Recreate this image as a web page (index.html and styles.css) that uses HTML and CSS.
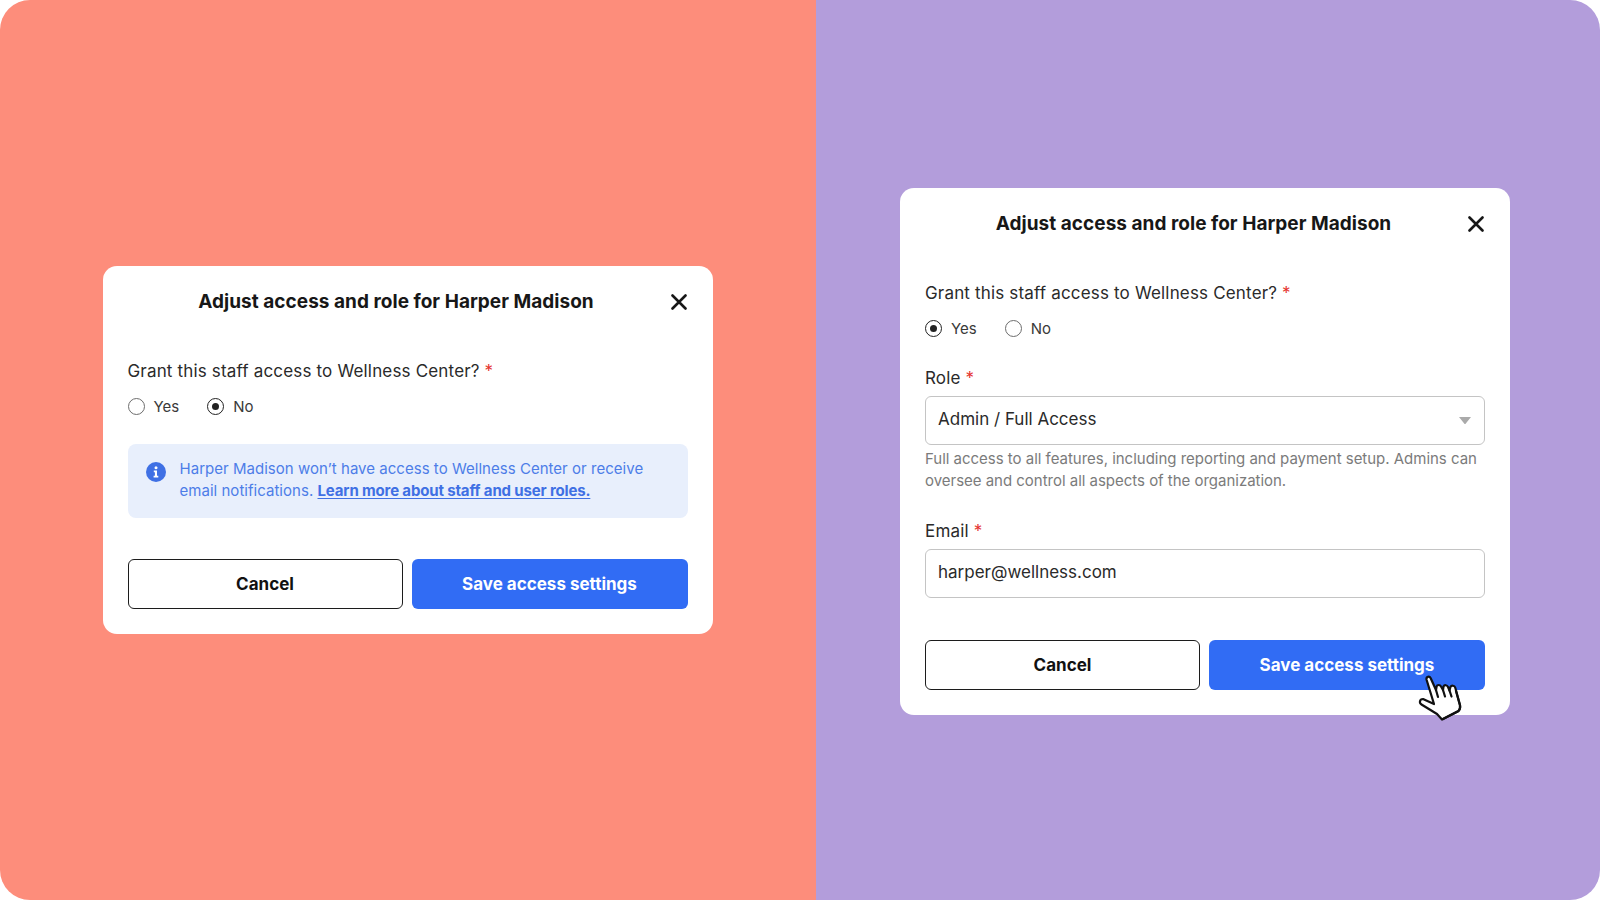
FILE: index.html
```html
<!DOCTYPE html>
<html lang="en">
<head>
<meta charset="utf-8">
<title>Adjust access</title>
<link rel="stylesheet" href="styles.css">
</head>
<body>
<main class="stage">
  <section class="panel panel-coral">
    <div class="dialog">
      <header class="dialog-head">
        <h2 class="dialog-title">Adjust access and role for Harper Madison</h2>
        <svg class="close" viewBox="0 0 16 16" width="16" height="16"><path d="M1.5 1.5 14.5 14.5M14.5 1.5 1.5 14.5"/></svg>
      </header>
      <div class="field-label q">Grant this staff access to Wellness Center? <span class="req">*</span></div>
      <div class="radios">
        <div class="radio"><span class="dot"></span>Yes</div>
        <div class="radio"><span class="dot on"></span>No</div>
      </div>
      <div class="notice">
        <svg class="info" viewBox="0 0 20 20" width="20" height="20"><circle cx="10" cy="10" r="10" fill="#3f70e4"/><circle cx="10" cy="5.8" r="1.500" fill="#fff"/><path d="M7.800 8.600H11v5.200h1.300v1.600H7.600v-1.600h1.300v-3.600H7.800z" fill="#fff"/></svg>
        <p class="notice-text">Harper Madison won’t have access to Wellness Center or receive email notifications. <a class="notice-link">Learn more about staff and user roles.</a></p>
      </div>
      <div class="actions">
        <div class="btn btn-ghost">Cancel</div>
        <div class="btn btn-primary">Save access settings</div>
      </div>
    </div>
  </section>
  <section class="panel panel-violet">
    <div class="dialog">
      <header class="dialog-head">
        <h2 class="dialog-title">Adjust access and role for Harper Madison</h2>
        <svg class="close" viewBox="0 0 16 16" width="16" height="16"><path d="M1.5 1.5 14.5 14.5M14.5 1.5 1.5 14.5"/></svg>
      </header>
      <div class="field-label q">Grant this staff access to Wellness Center? <span class="req">*</span></div>
      <div class="radios">
        <div class="radio"><span class="dot on"></span>Yes</div>
        <div class="radio"><span class="dot"></span>No</div>
      </div>
      <div class="field-label role">Role <span class="req">*</span></div>
      <div class="input">Admin / Full Access<svg class="caret" viewBox="0 0 12 7" width="12" height="7"><path d="M0 0h12L6.800 6.400a1 1 0 0 1-1.600 0z"/></svg></div>
      <p class="help">Full access to all features, including reporting and payment setup. Admins can oversee and control all aspects of the organization.</p>
      <div class="field-label email">Email <span class="req">*</span></div>
      <div class="input">harper@wellness.com</div>
      <div class="actions actions-form">
        <div class="btn btn-ghost">Cancel</div>
        <div class="btn btn-primary">Save access settings</div>
      </div>
      <svg class="hand" viewBox="0 0 60 60" width="60" height="60"><path d="M16.500 10.500C16 7.500 19.500 6.800 20.700 9.200L26 21l.6-3.500C27.200 15.500 30 15.500 31 17.500L33 21l.5-3.500C34.500 15.500 37 16 38 18l1.500 3.500.9-3.500C41.500 16 44.500 16.500 45.200 18.500L50 36c.5 3 -.5 5 -1.500 6L32 50.500l-5-5.500L11.500 35.500C9 34 9.500 30 13 30l11 5z" fill="#fff" stroke="#111" stroke-width="2.200" stroke-linejoin="round"/><path d="M26 21l2 7M33 21l2 6.500M39.500 21.500l2 6M46 22l4 14.500c.4 2.500-.4 4.500-1.500 5.500L33 50" fill="none" stroke="#111" stroke-width="2.200" stroke-linecap="round"/></svg>
    </div>
  </section>
</main>
</body>
</html>
```
FILE: styles.css
```css
* { box-sizing: border-box; }
html, body { margin: 0; height: 100%; background: #fff; }
body { font-family: Inter, "Liberation Sans", sans-serif; color: #1a1a1a; overflow: hidden; }
.stage { display: flex; width: 1600px; height: 900px; border-radius: 30px; overflow: hidden; }
.panel { height: 900px; display: flex; align-items: center; }
.panel-coral { width: 816px; background: #fd8d7b; padding-left: 102.5px; }
.panel-violet { width: 784px; background: #b39ddb; padding-left: 84px; padding-top: 2px; }
.dialog { position: relative; width: 610px; padding: 25px; background: #fff; border-radius: 14px; }
.dialog-head { display: flex; align-items: center; height: 22px; }
.dialog-title { flex: 1; margin: 0; padding-right: 6px; text-align: center; font-size: 19px; line-height: 22px; font-weight: 700; letter-spacing: 0.03px; color: #171717; }
.close { flex: none; margin-right: 1px; }
.close path { fill: none; stroke: #171717; stroke-width: 2.600; stroke-linecap: round; }
.field-label { font-size: 17px; line-height: 22px; color: #2a2a2a; letter-spacing: 0.17px; }
.q { margin-top: 47px; }
.role { margin-top: 28px; }
.email { margin-top: 27px; }
.req { color: #e5322e; }
.radios { display: flex; gap: 28px; margin-top: 14px; height: 20px; }
.panel-violet .radios { margin-top: 15px; }
.radio { display: flex; align-items: center; gap: 9px; font-size: 15px; color: #3a3a3a; }
.dot { width: 17px; height: 17px; border: 1.500px solid #6d6d6d; border-radius: 50%; display: flex; align-items: center; justify-content: center; }
.dot.on { border-color: #222; }
.dot.on::after { content: ""; width: 7px; height: 7px; border-radius: 50%; background: #222; }
.notice { display: flex; gap: 14px; margin-top: 28px; padding: 14px 25px 16px 18px; background: #e8effc; border-radius: 8px; }
.info { flex: none; margin-top: 4px; }
.notice-text { margin: 0; font-size: 15px; line-height: 22px; letter-spacing: 0.03px; color: #4d7de8; }
.notice-link { font-weight: 700; letter-spacing: -0.15px; color: #3f70e4; text-decoration: underline; text-underline-offset: 2px; text-decoration-thickness: 1px; }
.actions { display: grid; grid-template-columns: 275px 276px; gap: 9px; margin-top: 41px; }
.actions-form { margin-top: 42px; }
.btn { height: 50px; display: flex; align-items: center; justify-content: center; border-radius: 6px; font-size: 17px; font-weight: 700; }
.btn-ghost { border: 1.500px solid #1c1c1c; color: #111; background: #fff; }
.btn-primary { background: #316cf4; color: #fff; }
.input { position: relative; display: flex; align-items: center; justify-content: space-between; height: 49px; margin-top: 7px; padding: 0 13px 3px 12px; border: 1.500px solid #c4c4c4; border-radius: 6px; font-size: 17px; color: #2a2a2a; }
.caret { margin-top: 4px; }
.caret path { fill: #aaa; }
.help { margin: 3px 0 0; font-size: 15px; line-height: 22.5px; letter-spacing: -0.02px; color: #7b7b7b; }
.hand { position: absolute; left: 510px; top: 481px; }
```
